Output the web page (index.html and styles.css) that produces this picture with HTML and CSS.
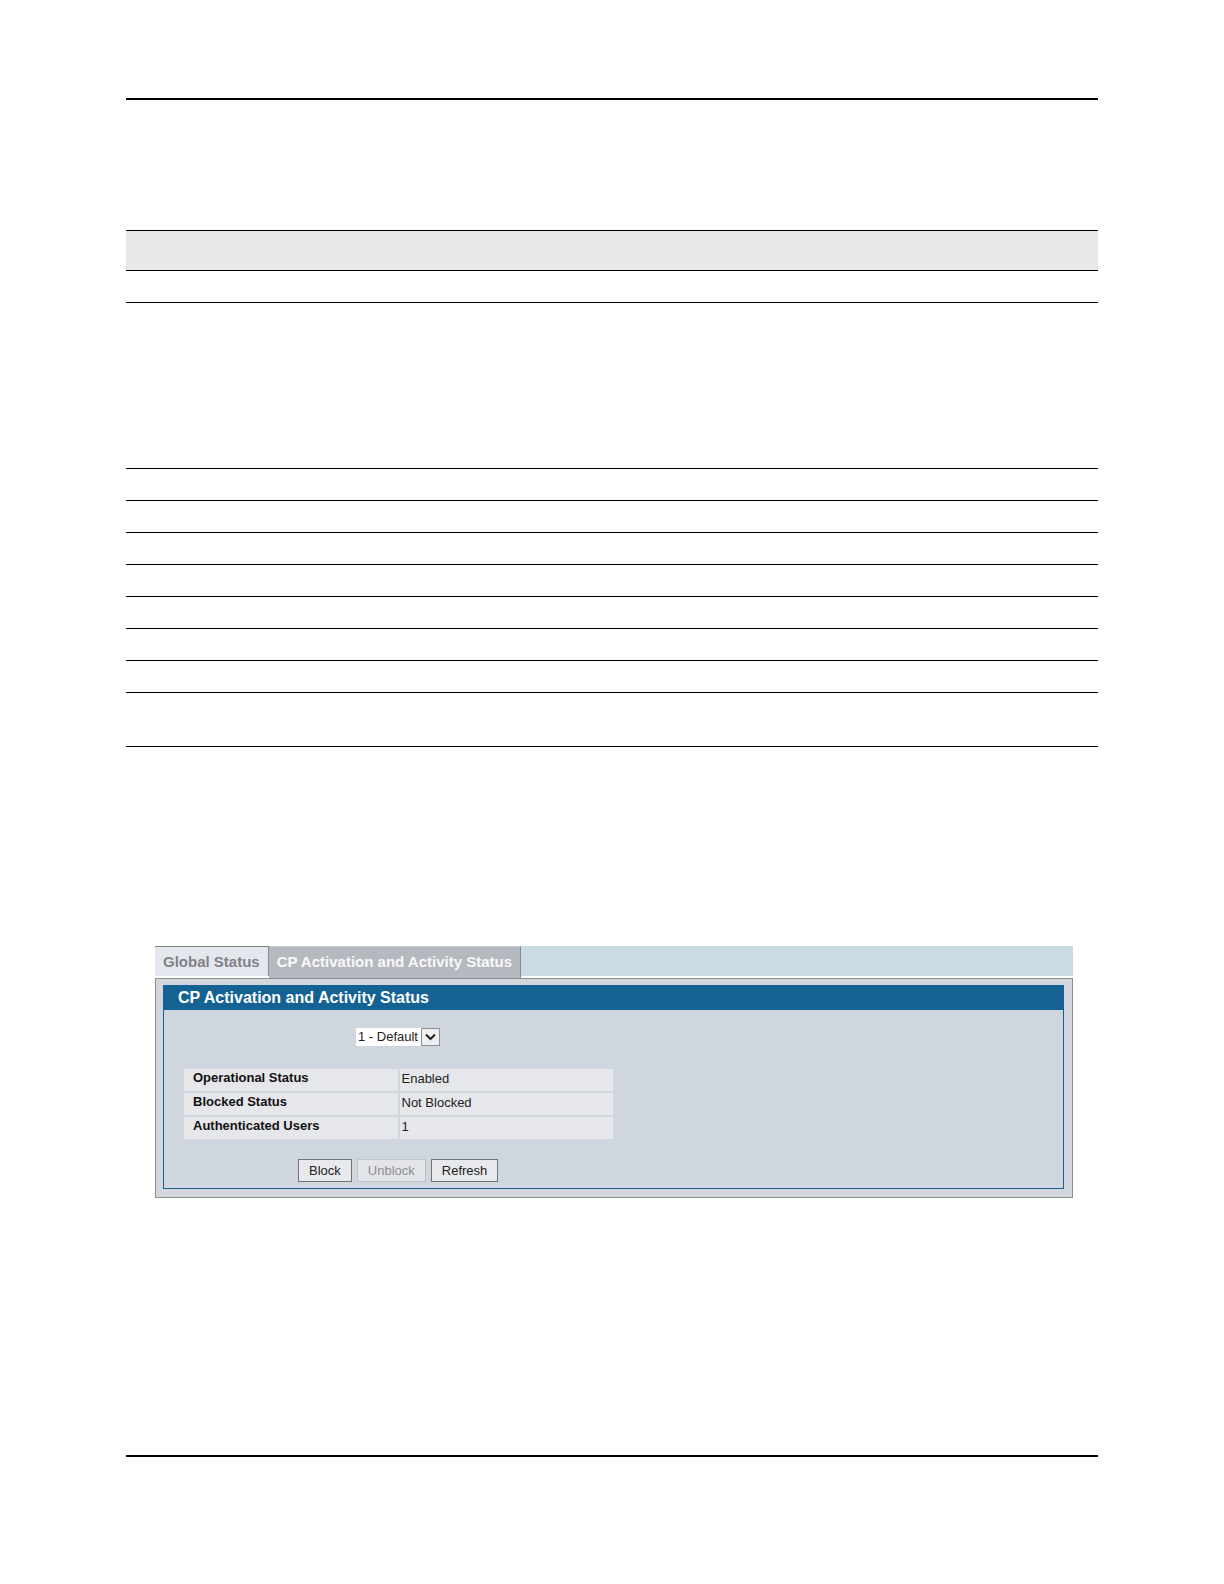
FILE: index.html
```html
<!DOCTYPE html>
<html lang="en">
<head>
    <meta charset="UTF-8">
    <meta name="viewport" content="width=device-width, initial-scale=1.0">
    <title>CP Activation and Activity Status</title>
    <link rel="stylesheet" href="styles.css">
</head>
<body>
    <div class="page">
        <header class="page-header"></header>

        <!-- Field table, ruled rows only -->
        <table class="field-table">
            <thead>
                <tr><th></th><th></th></tr>
            </thead>
            <tbody>
                <tr><td></td><td></td></tr>
                <tr class="row-tall"><td></td><td></td></tr>
                <tr><td></td><td></td></tr>
                <tr><td></td><td></td></tr>
                <tr><td></td><td></td></tr>
                <tr><td></td><td></td></tr>
                <tr><td></td><td></td></tr>
                <tr><td></td><td></td></tr>
                <tr><td></td><td></td></tr>
                <tr class="row-double"><td></td><td></td></tr>
            </tbody>
        </table>

        <!-- Captive portal status -->
        <main class="status">
            <nav class="tabs">
                <a href="#global" class="tab">Global Status</a>
                <a href="#activation" class="tab active">CP Activation and Activity Status</a>
            </nav>

            <div class="panel">
                <form class="panel-box" id="activation">
                    <h2>CP Activation and Activity Status</h2>

                    <div class="select-wrap">
                        <select id="portal" name="portal" aria-label="Captive portal">
                            <option>1 - Default</option>
                        </select>
                        <svg class="select-arrow" viewBox="0 0 19 18" aria-hidden="true">
                            <rect x="0.5" y="0.5" width="18" height="17" fill="#f0f0f2" stroke="#8c8f94"/>
                            <path d="M5 6.5 L9.5 11 L14 6.5" fill="none" stroke="#222" stroke-width="2"/>
                        </svg>
                    </div>

                    <table class="status-table">
                        <tr>
                            <th scope="row">Operational Status</th>
                            <td>Enabled</td>
                        </tr>
                        <tr>
                            <th scope="row">Blocked Status</th>
                            <td>Not Blocked</td>
                        </tr>
                        <tr>
                            <th scope="row">Authenticated Users</th>
                            <td>1</td>
                        </tr>
                    </table>

                    <div class="buttons">
                        <button type="button">Block</button>
                        <button type="button" disabled>Unblock</button>
                        <button type="button">Refresh</button>
                    </div>
                </form>
            </div>
        </main>

        <footer class="page-footer"></footer>
    </div>
</body>
</html>
```
FILE: styles.css
```css
* {
    margin: 0;
    padding: 0;
    box-sizing: border-box;
    font-family: "Liberation Sans", Arial, sans-serif;
}

body {
    background-color: #fff;
    color: #222;
}

.page {
    min-height: 100vh;
    padding: 0 126px;
    display: flex;
    flex-direction: column;
}

.page-header {
    height: 100px;
    border-bottom: 2px solid #000;
    margin-bottom: 130px;
}

.page-footer {
    height: 129px;
    margin-top: auto;
    border-top: 2px solid #000;
}

/* Ruled table */
.field-table {
    width: 100%;
    border-collapse: separate;
    border-spacing: 0;
    border-top: 1px solid #000;
    margin-bottom: 199px;
}

.field-table th,
.field-table td {
    height: 32px;
    border-bottom: 1px solid #000;
}

.field-table th {
    height: 40px;
    background-color: #e8e8e8;
}

.field-table .row-tall td {
    height: 166px;
}

.field-table .row-double td {
    height: 54px;
}

/* Status screen */
.status {
    margin: 0 25px 0 29px;
}

.tabs {
    display: flex;
    height: 32px;
    background-color: #c9dce4;
    border-bottom: 2px solid #fff;
}

.tab {
    height: 30px;
    padding: 0 8px;
    border-top: 1px solid #85888c;
    border-right: 1px solid #85888c;
    background-color: #e4e8ee;
    color: #808286;
    font-size: 15px;
    font-weight: bold;
    line-height: 30px;
    text-decoration: none;
    white-space: nowrap;
}

.tab.active {
    height: 32px;
    border-top-color: #c9cccf;
    background-color: #b5b9bf;
    color: #f8f8f8;
}

.panel {
    padding: 6px 8px 8px 7px;
    border: 1px solid #8a8d90;
    background-color: #d3d7dd;
}

.panel-box {
    border: 1px solid #146294;
    background-color: #d0d6de;
    padding-bottom: 6px;
}

.panel-box h2 {
    height: 24px;
    padding-left: 14px;
    background-color: #146294;
    color: #fff;
    font-size: 16px;
    line-height: 24px;
}

.select-wrap {
    position: relative;
    width: 84px;
    height: 18px;
    margin: 18px 0 21px 192px;
}

.select-wrap select {
    appearance: none;
    display: block;
    width: 100%;
    height: 18px;
    padding-left: 2px;
    border: none;
    border-radius: 0;
    background-color: #fff;
    color: #222;
    font-size: 13px;
    line-height: 18px;
}

.select-arrow {
    position: absolute;
    top: 0;
    right: 0;
    width: 19px;
    height: 18px;
    pointer-events: none;
}

.status-table {
    width: 433px;
    margin-left: 18px;
    border-spacing: 2px;
    table-layout: fixed;
}

.status-table th,
.status-table td {
    height: 22px;
    background-color: #e6e7eb;
    font-size: 13px;
    line-height: 18px;
    text-align: left;
    vertical-align: top;
}

.status-table th {
    padding-left: 9px;
    color: #111;
}

.status-table td {
    padding: 1px 0 0 2px;
}

.buttons {
    display: flex;
    gap: 5px;
    margin: 18px 0 0 134px;
}

.buttons button {
    height: 23px;
    padding: 0 10px;
    border: 1px solid #707478;
    background-color: #e8e9ec;
    color: #222;
    font-size: 13px;
}

.buttons button:disabled {
    border-color: #c0c4c8;
    background-color: #e2e4e8;
    color: #8c8e90;
}
```
